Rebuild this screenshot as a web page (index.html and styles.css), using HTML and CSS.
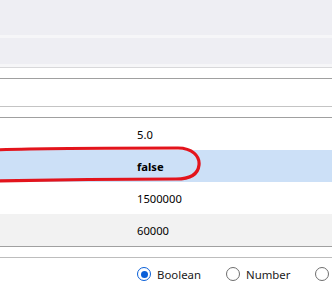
FILE: index.html
```html
<!DOCTYPE html>
<html lang="en">

<head>
    <meta charset="UTF-8">
    <meta name="viewport" content="width=device-width, initial-scale=1.0">
    <title>Property values</title>
    <link rel="stylesheet" href="styles.css">
</head>

<body>
    <div class="page">
        <!-- toolbar area -->
        <div class="toolbar"></div>
        <div class="toolbar-sep"></div>
        <div class="subbar"></div>
        <div class="subbar-sep"></div>

        <!-- header of the grid -->
        <div class="gap gap-dark"></div>
        <div class="blank-row"></div>
        <div class="gap gap-dark"></div>

        <!-- values -->
        <div class="rows">
            <div class="row"><span class="name"></span><span class="value">5.0</span></div>
            <div class="row selected"><span class="name"></span><span class="value">false</span></div>
            <div class="row"><span class="name"></span><span class="value">1500000</span></div>
            <div class="row alt"><span class="name"></span><span class="value">60000</span></div>
        </div>

        <div class="gap gap-light"></div>

        <!-- type picker (third option runs off the right edge) -->
        <div class="types">
            <label class="radio checked"><span class="dot"></span>Boolean</label>
            <label class="radio"><span class="dot"></span>Number</label>
            <label class="radio" aria-label="String"><span class="dot"></span></label>
        </div>

        <!-- red marker drawn over the selected row -->
        <svg class="marker" width="332" height="288" viewBox="0 0 332 288">
            <path d="M -6 150 C 40 148, 120 148, 178 148 C 192 148, 200 156, 199 165 C 198 175, 190 179, 176 179 C 120 179, 40 180, -6 181"
                fill="none" stroke="#e3141c" stroke-width="3.2" stroke-linecap="round" />
        </svg>
    </div>
</body>

</html>
```

FILE: styles.css
```css
/* base */
body {
    margin: 0;
    font-family: "Noto Sans", "Open Sans", sans-serif;
    color: #000000;
    background: #ffffff;
}

.page {
    position: relative;
    width: 332px;
    height: 288px;
    overflow: hidden;
}

/* toolbar */
.toolbar {
    height: 35px;
    background: #eeeef3;
}

.toolbar-sep,
.subbar-sep {
    height: 3px;
    background: #f6f6f8;
}

.subbar {
    height: 26px;
    background: #eeeef3;
}

.subbar-sep {
    border-bottom: 1px solid #d8d8da;
}

/* spacer lines */
.gap {
    height: 10px;
}

.gap-dark {
    border-bottom: 1px solid #a0a0a0;
}

.gap-light {
    border-bottom: 1px solid #bdbdbd;
}

.blank-row {
    height: 27px;
    border-bottom: 1px solid #c4c4c4;
}

/* grid rows */
.rows {
    border-bottom: 1px solid #a0a0a0;
}

.row {
    display: grid;
    grid-template-columns: 137px 1fr;
    align-items: center;
    height: 32px;
    font-size: 11.2px;
}

.row.selected {
    background: #cce0f7;
    font-weight: bold;
}

.row.alt {
    background: #f2f2f2;
}

/* radios */
.types {
    display: flex;
    align-items: center;
    gap: 25px;
    height: 32px;
    padding-left: 137px;
    font-size: 11.4px;
    color: #1a1a1a;
    white-space: nowrap;
}

.radio {
    display: flex;
    align-items: center;
    gap: 6px;
}

.dot {
    box-sizing: border-box;
    width: 14px;
    height: 14px;
    border: 1px solid #6e6e6e;
    border-radius: 50%;
    display: flex;
    align-items: center;
    justify-content: center;
}

.radio.checked .dot {
    border: 1.5px solid #0a5fd8;
}

.radio.checked .dot::after {
    content: "";
    width: 7px;
    height: 7px;
    border-radius: 50%;
    background: #0a5fd8;
}

/* annotation */
.marker {
    position: absolute;
    left: 0;
    top: 0;
    pointer-events: none;
}
```
